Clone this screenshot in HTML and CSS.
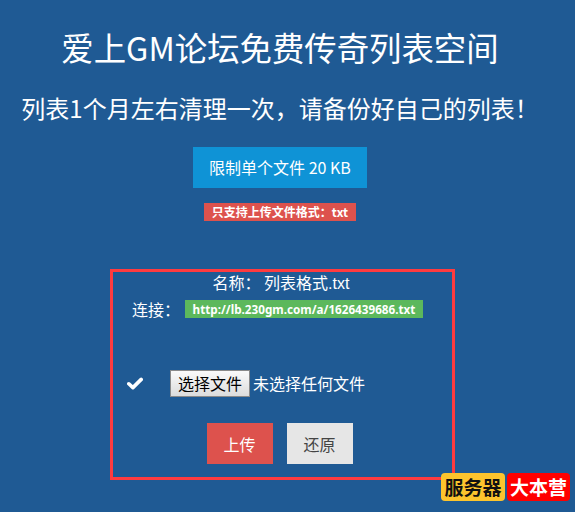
FILE: index.html
```html
<!DOCTYPE html>
<html>
<head>
    <meta charset="utf-8">
    <meta name="viewport" content="width=device-width, initial-scale=1">
    <title>爱上GM论坛免费传奇列表空间</title>
    <link rel="stylesheet" href="styles.css">
</head>
<body>
    <h1 class="title">爱上GM论坛免费传奇列表空间</h1>
    <h2 class="subtitle">列表1个月左右清理一次，请备份好自己的列表！</h2>
    <div class="limit">限制单个文件 20 KB</div>
    <div class="format"><span class="label label-red">只支持上传文件格式：txt</span></div>

    <form class="upload-box">
        <div class="name-row">名称： 列表格式.txt</div>
        <div class="link-row">
            <span class="link-title">连接：</span>
            <span class="label label-green">http://lb.230gm.com/a/1626439686.txt</span>
        </div>
        <div class="file-row">
            <svg class="check" viewBox="0 0 16 13" width="16" height="13">
                <path d="M1.8 6.8 L5.9 10.6 L14.2 2.4" fill="none" stroke="#fff" stroke-width="3.6" stroke-linejoin="round" stroke-linecap="round"/>
            </svg>
            <button type="button" class="file-button">选择文件</button>
            <span class="file-name">未选择任何文件</span>
        </div>
        <div class="action-row">
            <button type="button" class="btn btn-upload">上传</button>
            <button type="button" class="btn btn-reset">还原</button>
        </div>
    </form>

    <div class="badges">
        <span class="badge badge-yellow">服务器</span>
        <span class="badge badge-red">大本营</span>
    </div>
</body>
</html>
```

FILE: styles.css
```css
* {
    box-sizing: border-box;
}
body {
    position: relative;
    margin: 0;
    height: 512px;
    overflow: hidden;
    padding: 25px 15px 0 0;
    background-color: #1F5A94;
    color: #fff;
    font-family: "Noto Sans CJK SC", "Noto Sans", sans-serif;
    font-size: 16px;
    text-align: center;
}
.title {
    margin: 0;
    height: 43px;
    line-height: 43px;
    font-size: 32.4px;
    font-weight: normal;
}
.subtitle {
    margin: 22px 0 0;
    height: 36px;
    line-height: 36px;
    font-size: 24px;
    font-weight: normal;
    white-space: nowrap;
}
.limit {
    width: 174px;
    height: 41px;
    margin: 21px auto 0;
    line-height: 41px;
    background-color: #0F93D6;
}
.format {
    display: flex;
    justify-content: center;
    margin-top: 15px;
}
.label {
    display: inline-block;
    height: 18px;
    line-height: 18px;
    color: #fff;
    font-size: 12px;
    font-weight: bold;
}
.label-red {
    width: 152px;
    background-color: #DD524D;
}
.label-green {
    width: 238px;
    background-color: #5CB85C;
    font-family: "Noto Sans", sans-serif;
    font-size: 11.7px;
}
.upload-box {
    width: 345px;
    height: 211px;
    margin: 48px 0 0 110px;
    border: 3px solid #FF3B3F;
}
.name-row {
    height: 24px;
    padding-right: 3px;
    line-height: 23px;
    word-spacing: -1px;
    font-family: "Liberation Sans", "Noto Sans CJK SC", sans-serif;
}
.link-row {
    display: flex;
    align-items: center;
    height: 24px;
    padding-left: 19px;
    margin-top: 1px;
}
.link-title {
    width: 53px;
    text-align: left;
}
.file-row {
    display: flex;
    align-items: center;
    height: 28px;
    margin-top: 48px;
    padding-left: 14px;
}
.check {
    margin-right: 27px;
}
.file-button {
    width: 80px;
    height: 27px;
    padding: 0;
    border: 1px solid #8A8A8A;
    background: linear-gradient(#FAFAFA, #DCDCDC);
    color: #000;
    font-family: inherit;
    font-size: 16px;
}
.file-name {
    margin-left: 3px;
}
.action-row {
    display: flex;
    justify-content: center;
    gap: 14px;
    margin-top: 26px;
    padding-right: 6px;
}
.btn {
    width: 66px;
    height: 41px;
    border: none;
    font-family: inherit;
    font-size: 16px;
}
.btn-upload {
    background-color: #DD524D;
    color: #fff;
}
.btn-reset {
    background-color: #E6E6E6;
    color: #444;
}
.badges {
    position: absolute;
    top: 473px;
    left: 441px;
    display: flex;
    gap: 2px;
}
.badge {
    height: 28px;
    border-radius: 4px;
    line-height: 27px;
    font-size: 19px;
    font-weight: bold;
    white-space: nowrap;
}
.badge-yellow {
    width: 64px;
    background-color: #FDC42D;
    color: #111;
}
.badge-red {
    width: 63px;
    background-color: #FF0000;
    color: #fff;
}
```
